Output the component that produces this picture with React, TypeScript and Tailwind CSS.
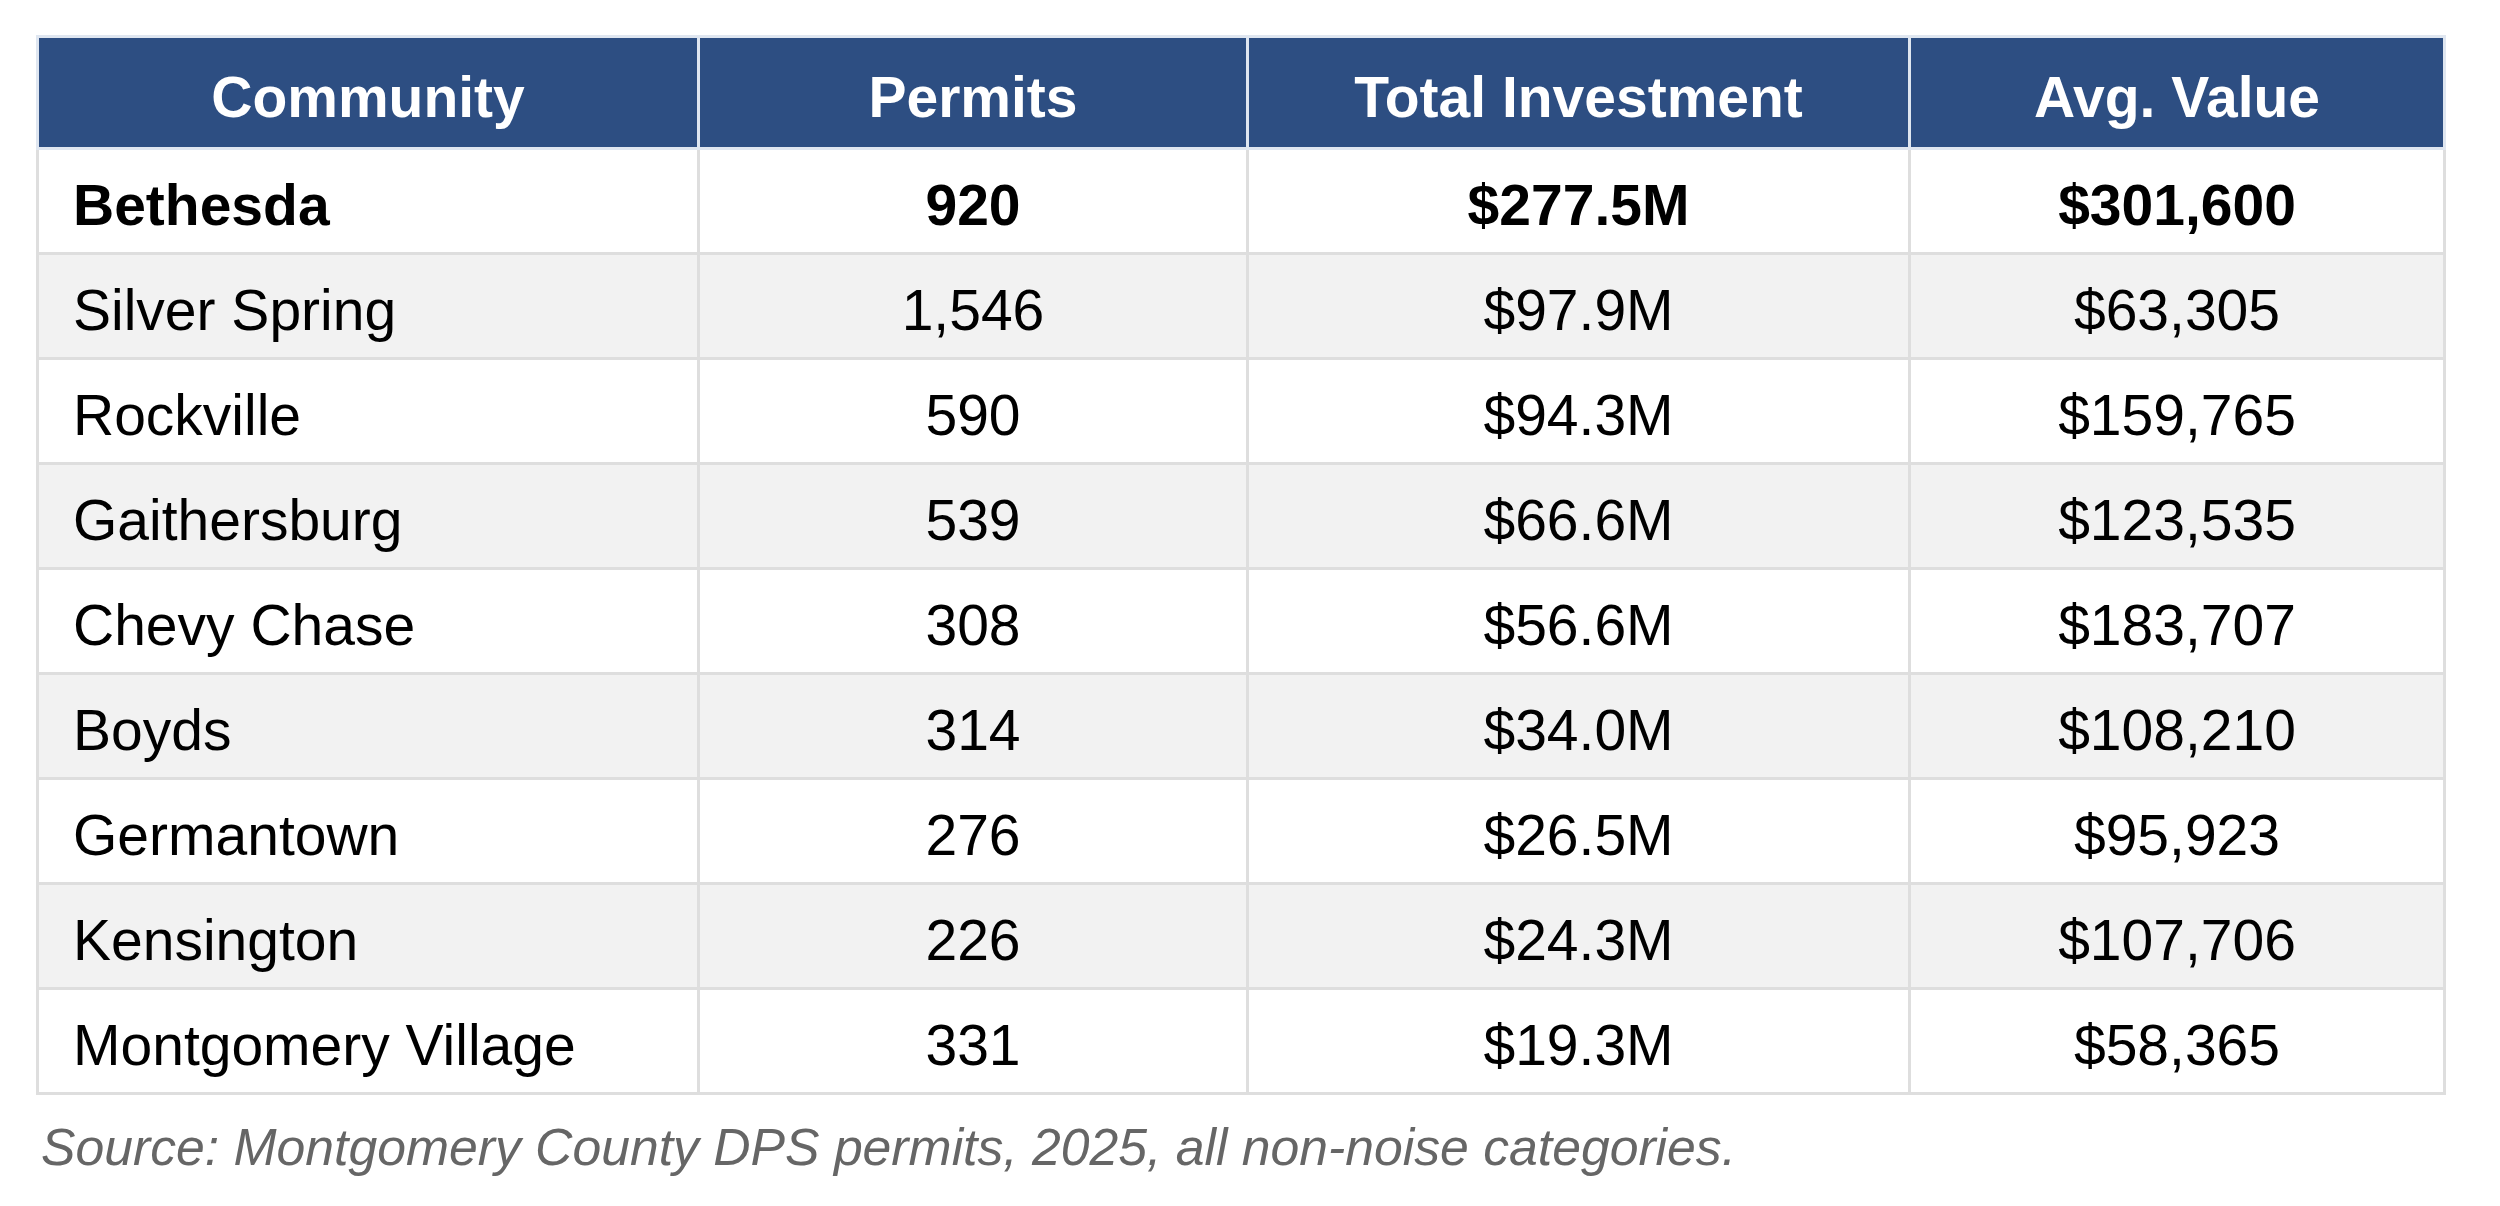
const rows = [
  { name: "Bethesda", permits: "920", total: "$277.5M", avg: "$301,600", bold: true },
  { name: "Silver Spring", permits: "1,546", total: "$97.9M", avg: "$63,305" },
  { name: "Rockville", permits: "590", total: "$94.3M", avg: "$159,765" },
  { name: "Gaithersburg", permits: "539", total: "$66.6M", avg: "$123,535" },
  { name: "Chevy Chase", permits: "308", total: "$56.6M", avg: "$183,707" },
  { name: "Boyds", permits: "314", total: "$34.0M", avg: "$108,210" },
  { name: "Germantown", permits: "276", total: "$26.5M", avg: "$95,923" },
  { name: "Kensington", permits: "226", total: "$24.3M", avg: "$107,706" },
  { name: "Montgomery Village", permits: "331", total: "$19.3M", avg: "$58,365" },
];

export default function App() {
  return (
    <div
      className="min-h-[1206px] w-[2500px] bg-white pl-[36px] pt-[35px]"
      style={{ fontFamily: '"Liberation Sans", Arial, sans-serif' }}
    >
      <table className="w-[2407px] table-fixed border-collapse border-[3px] border-[#dedede] text-[57px] text-black">
        <colgroup>
          <col className="w-[661px]" />
          <col className="w-[549px]" />
          <col className="w-[662px]" />
          <col className="w-[535px]" />
        </colgroup>
        <thead>
          <tr className="h-[112px] bg-[#2d4e82] text-white">
            <th className="border-[3px] border-[#dfe6f0] pt-[10px] font-bold">Community</th>
            <th className="border-[3px] border-[#dfe6f0] pt-[10px] font-bold">Permits</th>
            <th className="border-[3px] border-[#dfe6f0] pt-[10px] font-bold">Total Investment</th>
            <th className="border-[3px] border-[#dfe6f0] pt-[10px] font-bold">Avg. Value</th>
          </tr>
        </thead>
        <tbody>
          {rows.map((r, i) => (
            <tr
              key={r.name}
              className={`h-[105px] ${i % 2 === 1 ? "bg-[#f2f2f2]" : "bg-white"} ${r.bold ? "font-bold" : "font-normal"}`}
            >
              <td className="border-[3px] border-[#dedede] pl-[34px] pt-[10px] text-left">{r.name}</td>
              <td className="border-[3px] border-[#dedede] pt-[10px] text-center">{r.permits}</td>
              <td className="border-[3px] border-[#dedede] pt-[10px] text-center">{r.total}</td>
              <td className="border-[3px] border-[#dedede] pt-[10px] text-center">{r.avg}</td>
            </tr>
          ))}
        </tbody>
      </table>
      <p className="mt-[14px] pl-[5px] text-[51.7px] italic text-[#666666]">
        Source: Montgomery County DPS permits, 2025, all non-noise categories.
      </p>
    </div>
  );
}
